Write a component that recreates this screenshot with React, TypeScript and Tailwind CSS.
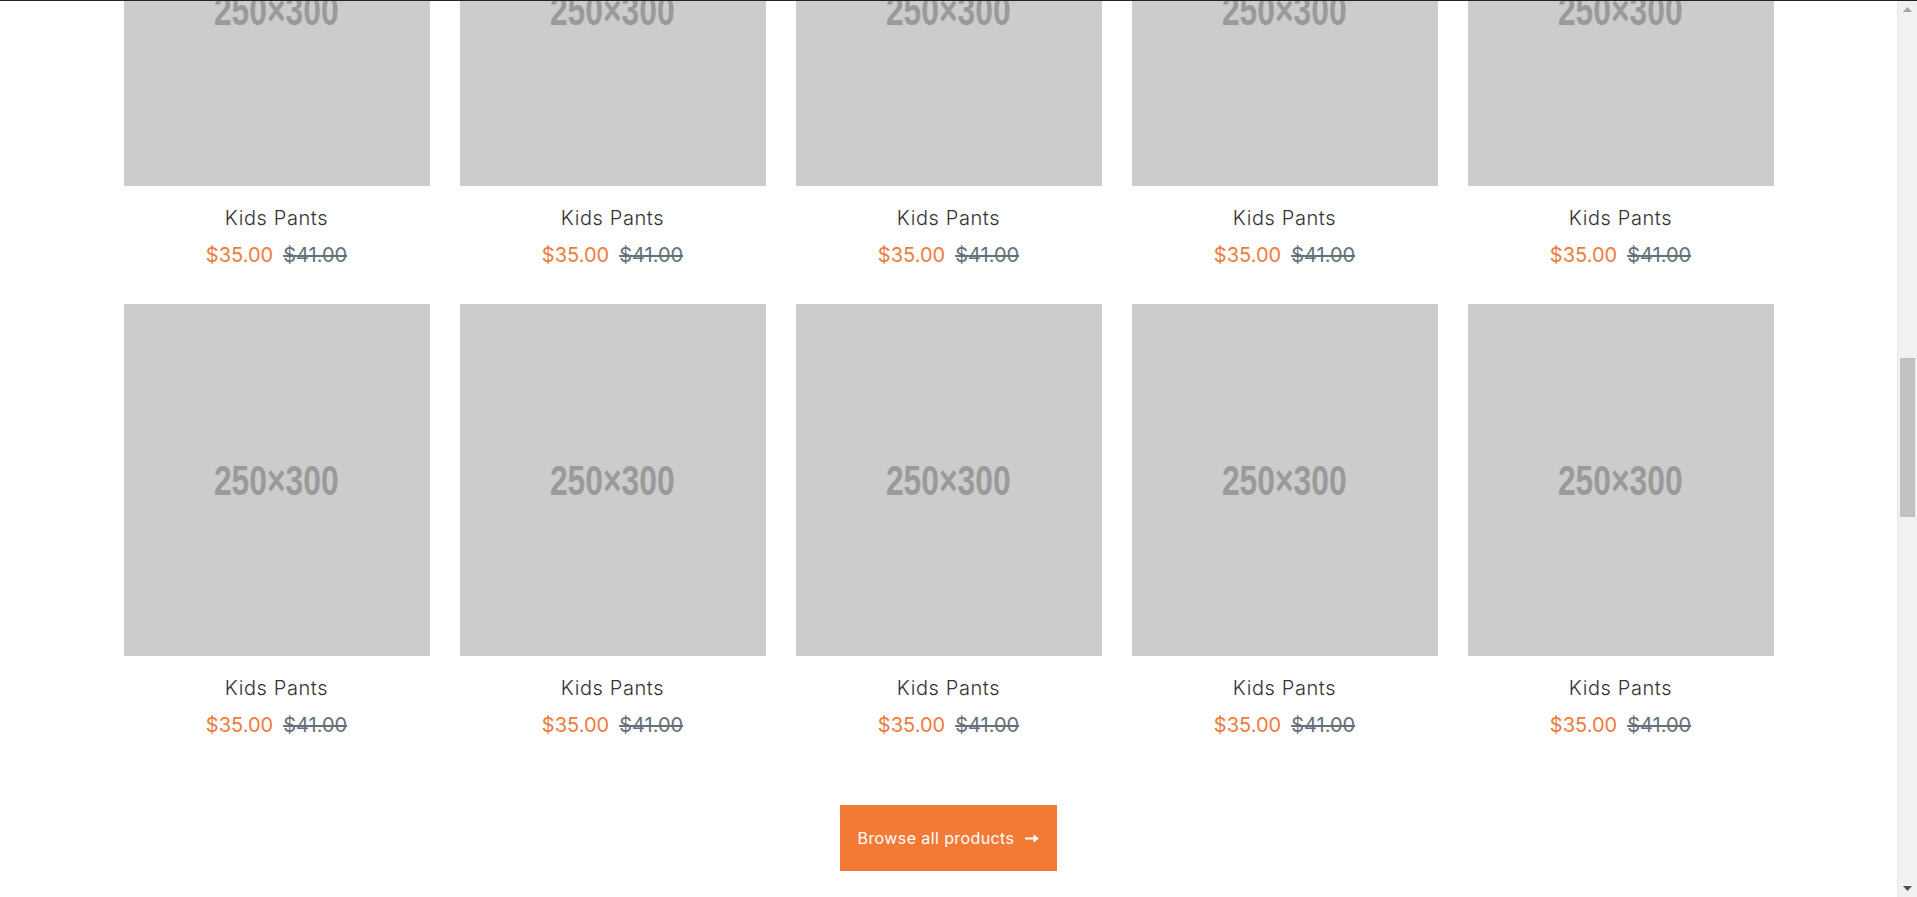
import React from 'react';

const products = Array.from({ length: 10 }, (_, i) => ({
  id: i,
  name: 'Kids Pants',
  price: '$35.00',
  oldPrice: '$41.00',
}));

const Placeholder = () => (
  <div className="h-[352px] bg-[#cccccc] flex items-center justify-center overflow-hidden">
    <span
      className="text-[43px] leading-none font-bold text-[#9a9a9a] scale-x-[0.74] whitespace-nowrap"
      style={{ fontFamily: '"Liberation Sans", Arial, sans-serif' }}
    >
      250×300
    </span>
  </div>
);

const ProductCard = ({ name, price, oldPrice }: { name: string; price: string; oldPrice: string }) => (
  <div className="flex flex-col">
    <Placeholder />
    <h3 className="mt-[17px] h-[30px] leading-[30px] text-center text-[20px] font-light tracking-[0.6px] text-[#333]">{name}</h3>
    <div className="mt-[7px] h-[30px] leading-[30px] flex items-center justify-center gap-[10px] text-[20px]">
      <span className="text-[#ee7b3e]">{price}</span>
      <span className="text-[#65717a] line-through">{oldPrice}</span>
    </div>
  </div>
);

const Scrollbar = () => (
  <div className="w-[20px] bg-[#f1f1f1] flex flex-col items-center border-l border-[#e8e8e8]">
    <div className="h-[17px] flex items-center justify-center">
      <svg width="9" height="5" viewBox="0 0 9 5"><path d="M0 5 L4.5 0 L9 5 Z" fill="#a3a3a3" /></svg>
    </div>
    <div className="pt-[340px] w-full px-[2px]">
      <div className="h-[159px] bg-[#c1c1c1]" />
    </div>
    <div className="flex-1" />
    <div className="h-[17px] flex items-center justify-center">
      <svg width="9" height="5" viewBox="0 0 9 5"><path d="M0 0 L9 0 L4.5 5 Z" fill="#505050" /></svg>
    </div>
  </div>
);

export default function App() {
  return (
    <div
      className="h-[897px] overflow-hidden flex flex-col bg-white"
      style={{ fontFamily: 'Inter, "Noto Sans", sans-serif' }}
    >
      <div className="h-px bg-[#222]" />
      <div className="flex flex-1 min-h-0">
        <main className="flex-1 overflow-hidden">
          {/* page is scrolled: first row starts above the viewport */}
          <section className="w-[1650px] mx-auto -mt-[167px]">
            <div className="grid grid-cols-5 gap-x-[30px] gap-y-[34px]">
              {products.map((p) => (
                <ProductCard key={p.id} {...p} />
              ))}
            </div>
            <div className="mt-[65px] flex justify-center">
              <button className="h-[66px] w-[217px] bg-[#f27a35] text-white text-[16px] tracking-[0.4px] flex items-center justify-center gap-[11px]">
                Browse all products
                <svg width="14" height="9" viewBox="0 0 14 9">
                  <path d="M0 3.5 H8.5 V0.5 L14 4.5 L8.5 8.5 V5.5 H0 Z" fill="#fff" />
                </svg>
              </button>
            </div>
          </section>
        </main>
        <Scrollbar />
      </div>
    </div>
  );
}
